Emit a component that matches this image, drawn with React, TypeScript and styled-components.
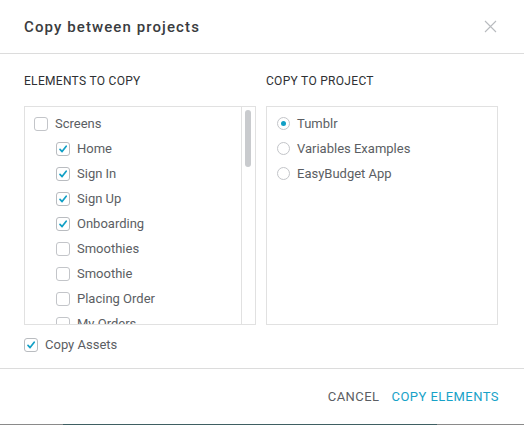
import React from 'react'
import styled, { createGlobalStyle } from 'styled-components'

const GlobalStyle = createGlobalStyle`
  html, body {
    margin: 0;
    padding: 0;
  }
  body {
    background: linear-gradient(to right, #8a8a8a 0, #8a8a8a 63px, #3f5f62 63px, #3f5f62 437px, #8a8a8a 437px);
    font-family: Roboto, "Noto Sans", "Liberation Sans", sans-serif;
  }
`

const Modal = styled.div`
  width: 524px;
  height: 424px;
  background: #ffffff;
  display: flex;
  flex-direction: column;
  box-sizing: border-box;
`

const Header = styled.div`
  height: 54px;
  display: flex;
  align-items: center;
  justify-content: space-between;
  padding: 0 24px;
  border-bottom: 1px solid #dcdcdc;
  box-sizing: border-box;
`

const Title = styled.h2`
  margin: 0;
  font-size: 15px;
  font-weight: 500;
  letter-spacing: 1.1px;
  color: #3a3c40;
`

const Close = styled.button`
  border: none;
  background: none;
  padding: 0;
  margin-right: 2px;
  width: 14px;
  height: 14px;
  display: flex;
  cursor: pointer;
`

const Body = styled.div`
  flex: 1;
  display: flex;
  flex-direction: column;
  padding: 20px 24px 0;
  box-sizing: border-box;
`

const Columns = styled.div`
  display: grid;
  grid-template-columns: 232px 232px;
  column-gap: 10px;
`

const Column = styled.div`
  display: flex;
  flex-direction: column;
`

const Label = styled.div`
  font-size: 12px;
  font-weight: 400;
  color: #2e3033;
  letter-spacing: 0.3px;
  height: 14px;
  line-height: 14px;
  margin-bottom: 18px;
`

const Panel = styled.div`
  height: 219px;
  border: 1px solid #e1e1e1;
  box-sizing: border-box;
  display: flex;
  overflow: hidden;
`

const List = styled.div`
  flex: 1;
  padding: 4px 0 0 9px;
  overflow: hidden;
`

const ScrollTrack = styled.div`
  width: 14px;
  border-left: 1px solid #e1e1e1;
  padding: 3px 0 0 3px;
  box-sizing: border-box;
`

const ScrollThumb = styled.div`
  width: 6px;
  height: 57px;
  border-radius: 3px;
  background: #c9cbce;
`

const Row = styled.label<{ $indent?: boolean }>`
  display: flex;
  align-items: center;
  height: 25px;
  gap: 7px;
  padding-left: ${({ $indent }) => ($indent ? '22px' : '0')};
  font-size: 13px;
  color: #5b5e63;
  white-space: nowrap;
  cursor: pointer;
`

const Box = styled.span<{ $on: boolean }>`
  width: 14px;
  height: 14px;
  flex: none;
  box-sizing: border-box;
  border: 1px solid ${({ $on }) => ($on ? '#b9bcc0' : '#c3c5c9')};
  border-radius: 3px;
  background: #fff;
  display: flex;
  align-items: center;
  justify-content: center;
`

const Radio = styled.span<{ $on: boolean }>`
  width: 13px;
  height: 13px;
  flex: none;
  box-sizing: border-box;
  border: 1px solid #c3c5c9;
  border-radius: 50%;
  display: flex;
  align-items: center;
  justify-content: center;
  &::after {
    content: '';
    width: 5px;
    height: 5px;
    border-radius: 50%;
    background: ${({ $on }) => ($on ? '#12a0c6' : 'transparent')};
  }
`

const RadioList = styled.div`
  flex: 1;
  padding: 4px 0 0 10px;
`

const AssetsRow = styled.div`
  margin-top: 7px;
`

const Footer = styled.div`
  height: 55px;
  margin-top: auto;
  border-top: 1px solid #dcdcdc;
  display: flex;
  align-items: center;
  justify-content: flex-end;
  gap: 12px;
  padding: 0 25px 0 0;
`

const Action = styled.button<{ $primary?: boolean }>`
  border: none;
  background: none;
  padding: 0;
  font-family: inherit;
  font-size: 13px;
  letter-spacing: 0.45px;
  color: ${({ $primary }) => ($primary ? '#17a2c8' : '#5b5e63')};
  cursor: pointer;
`

const Check = () => (
  <svg width="10" height="10" viewBox="0 0 10 10">
    <path d="M2 5.4 L4.1 7.6 L8.2 2.2" fill="none" stroke="#12a0c6" strokeWidth="1.7" strokeLinecap="round" strokeLinejoin="round" />
  </svg>
)

const CheckRow = ({ label, on, indent }: { label: string; on: boolean; indent?: boolean }) => (
  <Row $indent={indent}>
    <Box $on={on}>{on && <Check />}</Box>
    {label}
  </Row>
)

const screens = [
  { name: 'Home', on: true },
  { name: 'Sign In', on: true },
  { name: 'Sign Up', on: true },
  { name: 'Onboarding', on: true },
  { name: 'Smoothies', on: false },
  { name: 'Smoothie', on: false },
  { name: 'Placing Order', on: false },
  { name: 'My Orders', on: false },
]

const projects = ['Tumblr', 'Variables Examples', 'EasyBudget App']

export default function App() {
  return (
    <>
      <GlobalStyle />
      <Modal>
        <Header>
          <Title>Copy between projects</Title>
          <Close aria-label="close">
            <svg width="13" height="13" viewBox="0 0 13 13">
              <path d="M1 1 L12 12 M12 1 L1 12" stroke="#b8bbbf" strokeWidth="1.1" />
            </svg>
          </Close>
        </Header>
        <Body>
          <Columns>
            <Column>
              <Label>ELEMENTS TO COPY</Label>
              <Panel>
                <List>
                  <CheckRow label="Screens" on={false} />
                  {screens.map((s) => (
                    <CheckRow key={s.name} label={s.name} on={s.on} indent />
                  ))}
                </List>
                <ScrollTrack>
                  <ScrollThumb />
                </ScrollTrack>
              </Panel>
            </Column>
            <Column>
              <Label>COPY TO PROJECT</Label>
              <Panel>
                <RadioList>
                  {projects.map((p, i) => (
                    <Row key={p}>
                      <Radio $on={i === 0} />
                      {p}
                    </Row>
                  ))}
                </RadioList>
              </Panel>
            </Column>
          </Columns>
          <AssetsRow>
            <CheckRow label="Copy Assets" on />
          </AssetsRow>
        </Body>
        <Footer>
          <Action>CANCEL</Action>
          <Action $primary>COPY ELEMENTS</Action>
        </Footer>
      </Modal>
    </>
  )
}
